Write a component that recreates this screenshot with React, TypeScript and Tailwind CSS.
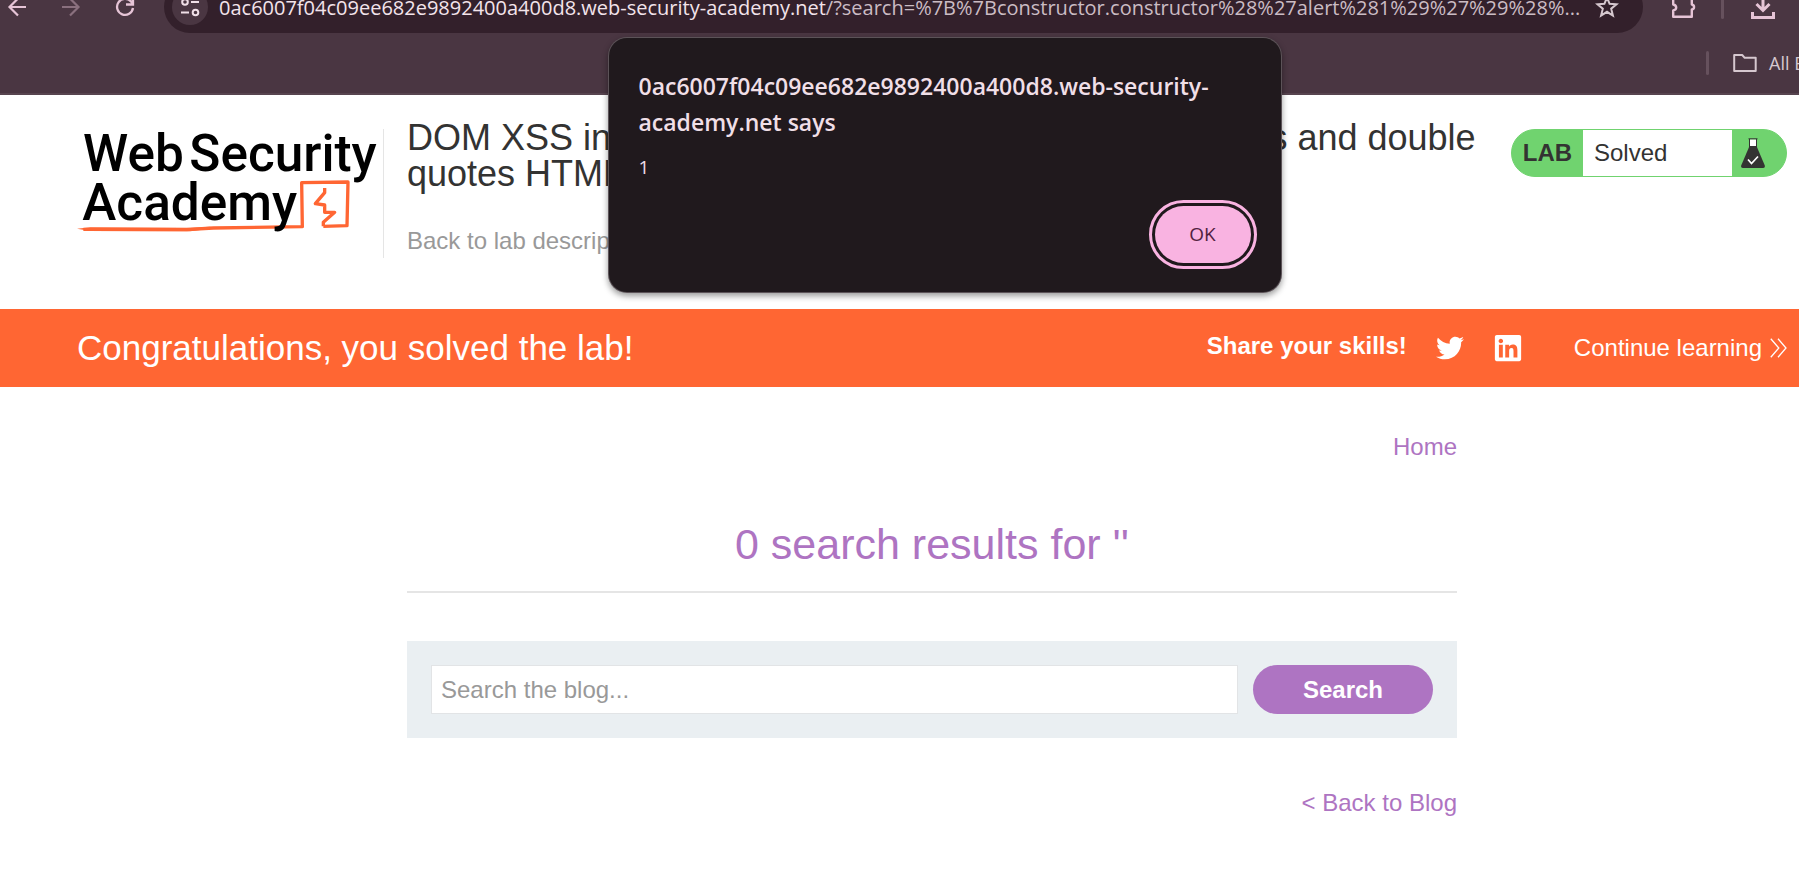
import { FaLinkedin, FaTwitter } from "react-icons/fa";

const uiFont = "font-['Open_Sans','Noto_Sans',sans-serif]";

function BrowserToolbar() {
  return (
    <header
      className={`h-[95px] overflow-hidden border-b-2 border-[#57444f] bg-[#4a3642] ${uiFont}`}
    >
      <div className="-mt-[19px] flex h-[52px] items-center pl-[5px]">
        <nav className="flex shrink-0 items-center gap-[30px]" aria-label="Browser">
          <button type="button" aria-label="Back" className="text-[#e6c4d6]">
            <svg width="24" height="24" viewBox="0 0 24 24" fill="none" stroke="currentColor" strokeWidth="2.2">
              <path d="M21 12H5M13 3.5 4.5 12l8.500 8.500" />
            </svg>
          </button>
          <button type="button" aria-label="Forward" className="text-[#8a707e]">
            <svg width="24" height="24" viewBox="0 0 24 24" fill="none" stroke="currentColor" strokeWidth="2.2">
              <path d="M3 12h16M11 3.500 19.500 12 11 20.500" />
            </svg>
          </button>
          <button type="button" aria-label="Reload" className="text-[#e6c4d6]">
            <svg width="24" height="24" viewBox="0 0 24 24" fill="none" stroke="currentColor" strokeWidth="2.3">
              <path d="M20 13a8 8 0 1 1-2-6.500L20 9M20 3v6.500h-7" />
            </svg>
          </button>
        </nav>
        <div className="ml-[27px] flex h-[52px] min-w-0 flex-1 items-center rounded-full bg-[#33202b] pr-[24px] pl-2">
          <button
            type="button"
            aria-label="Site information"
            className="flex size-9 shrink-0 items-center justify-center rounded-full bg-[#4a3642] text-[#f0dfe7]"
          >
            <svg width="20" height="20" viewBox="0 0 20 20" fill="none" stroke="currentColor" strokeWidth="2">
              <circle cx="5" cy="5" r="2.800" />
              <path d="M11 5h8M1 15.500h8" />
              <circle cx="15.500" cy="15.500" r="2.800" />
            </svg>
          </button>
          <p className="ml-[11px] min-w-0 flex-1 overflow-hidden pt-0.5 text-[20px] leading-8 whitespace-nowrap text-[#cbbcc4]">
            <span className="text-[#f3e4eb]">0ac6007f04c09ee682e9892400a400d8.web-security-academy.net</span>
            /?search=%7B%7Bconstructor.constructor%28%27alert%281%29%27%29%28%...
          </p>
          <button type="button" aria-label="Bookmark" className="ml-3 shrink-0 text-[#d6c8cf]">
            <svg width="24" height="24" viewBox="0 0 24 24" fill="none" stroke="currentColor" strokeWidth="2">
              <path d="m12 2.500 2.600 6.300 6.900.5-5.300 4.400 1.700 6.800L12 16.800l-5.900 3.700 1.700-6.800-5.300-4.400 6.900-.5z" />
            </svg>
          </button>
        </div>
        <div className="flex shrink-0 items-center pr-[22px] pl-[27px] text-[#e6c4d6]">
          <button type="button" aria-label="Extensions">
            <svg width="26" height="26" viewBox="0 0 26 26" fill="none" stroke="currentColor" strokeWidth="2.400" strokeLinejoin="round">
              <path d="M3.200 4.500h6a3 3 0 0 1 5.600 0h7v6c3 .5 3 4.500 0 5v7.300H3.200v-6.300c4-.8 4-5.200 0-6z" />
            </svg>
          </button>
          <span className="ml-[25px] h-6 w-[3px] rounded-full bg-[#66515d]" />
          <button type="button" aria-label="Downloads" className="ml-[25px]">
            <svg width="28" height="28" viewBox="0 0 28 28" fill="none" stroke="currentColor" strokeWidth="3">
              <path d="M14 1v16M7.500 11l6.500 6.500 6.500-6.500M3.500 19v5.500h21V19" />
            </svg>
          </button>
        </div>
      </div>
      <div className="flex h-[60px] items-center justify-end overflow-hidden">
        <span className="h-6 w-[3px] shrink-0 rounded-full bg-[#66515d]" />
        <button type="button" className="ml-[24px] flex w-[66px] shrink-0 items-center gap-3 overflow-hidden text-[18px] whitespace-nowrap text-[#d6c8cf]">
          <svg className="shrink-0" width="24" height="20" viewBox="0 0 24 20" fill="none" stroke="currentColor" strokeWidth="2" strokeLinejoin="round">
            <path d="M1.200 2h8l2.500 2.800h11V18H1.200z" />
          </svg>
          All Bookmarks
        </button>
      </div>
    </header>
  );
}

function AcademyLogo() {
  return (
    <svg
      role="img"
      aria-label="Web Security Academy"
      className="h-[129px] w-[300px] shrink-0"
      viewBox="51 57 900 387"
    >
      <g fill="none" stroke="#ff6633" strokeWidth="10" strokeLinejoin="round">
        <path d="M70 358 380 359 460 354 727 350 725 218 864 216 861 347 790 349" />
        <path d="M794 234v14l-28 33 28 4v22h30l-34 30v12" />
      </g>
      <path d="M51 356l40-4 300 1 60-3v6l-60 8-300-1z" fill="#ff6633" />
      <g fill="#000" fontFamily="Roboto, sans-serif" fontWeight="500" fontSize="154">
        <text x="69" y="182">Web</text>
        <text x="388" y="182">Security</text>
        <text x="67" y="329">Academy</text>
      </g>
    </svg>
  );
}

function LabStatus() {
  return (
    <div className="flex h-12 w-[276px] shrink-0 overflow-hidden rounded-full border border-[#70d36f] bg-[#70d36f] text-2xl text-[#333332]">
      <span className="flex w-[71px] items-center justify-center font-bold">LAB</span>
      <p className="flex w-[149px] items-center bg-white pl-[11px]">Solved</p>
      <svg className="mt-2 ml-[9px]" width="24" height="31" viewBox="0 0 24 31">
        <path d="M8.500 1.500h7v7h-7z" fill="#fff" />
        <path d="M7.500.8h9M8.500 1v8M15.500 1v8" stroke="#333332" fill="none" />
        <path d="M8.500 8h7l8.300 19.500q.4 2.500-2 2.500H2.200q-2.400 0-2-2.500z" fill="#333332" />
        <path d="m7 21.500 3.500 4L17 18.500" stroke="#fff" strokeWidth="1.700" fill="none" />
      </svg>
    </div>
  );
}

function AlertDialog() {
  return (
    <div
      role="alertdialog"
      aria-labelledby="alert-title"
      aria-describedby="alert-text"
      className={`absolute top-[38px] left-1/2 -ml-[291px] flex h-[254px] w-[672px] flex-col rounded-[18px] bg-[#20191d] px-[30px] pt-[30px] pb-[29px] text-[#f0dfe7] shadow-[0_0_0_1px_#5c5358,0_3px_6px_1px_rgba(0,0,0,0.4)] ${uiFont}`}
    >
      <h2 id="alert-title" className="text-[23px] leading-9 font-semibold">
        0ac6007f04c09ee682e9892400a400d8.web-security-
        <br />
        academy.net says
      </h2>
      <p id="alert-text" className="mt-[15px] text-[19px] leading-6">1</p>
      <button
        type="button"
        className="mt-auto h-[57px] w-24 self-end rounded-full bg-[#f9b3e1] text-[19px] font-medium text-[#52213f] outline-[3px] outline-offset-[3px] outline-[#f9b3e1]"
      >
        OK
      </button>
    </div>
  );
}

export default function App() {
  return (
    <div className="relative min-h-screen overflow-hidden bg-white font-['Liberation_Sans',Arial,sans-serif] text-2xl text-[#333332]">
      <BrowserToolbar />

      <section className="flex h-[214px] items-start pt-[34px] pr-3 pl-[77px]">
        <AcademyLogo />
        <div className="ml-[6px] h-[129px] w-px shrink-0 bg-[#e5e5e5]" />
        <div className="-mt-[9px] ml-[23px] min-w-0 flex-1 pr-6">
          <h1 className="text-[36px] leading-9">
            DOM XSS in AngularJS expression with angle brackets and double quotes HTML-encoded
          </h1>
          <a href="#lab" className="mt-[35px] inline-block leading-7 text-[#999]">
            Back to lab description
          </a>
        </div>
        <LabStatus />
      </section>

      <section className="flex h-[78px] items-center bg-[#ff6633] pr-3 pl-[77px] text-white">
        <h2 className="flex-1 text-[35px] leading-10">Congratulations, you solved the lab!</h2>
        <p className="pb-1 leading-7 font-bold">Share your skills!</p>
        <a href="#twitter" aria-label="Share on Twitter" className="ml-[29px]">
          <FaTwitter size={28} />
        </a>
        <a href="#linkedin" aria-label="Share on LinkedIn" className="ml-[29px]">
          <FaLinkedin size={30} />
        </a>
        <a href="#continue" className="ml-[51px] flex items-center gap-2 leading-7">
          Continue learning
          <svg width="17" height="20" viewBox="0 0 17 20" fill="none" stroke="currentColor" strokeWidth="1.300">
            <path d="m.8.800 8 9.200-8 9.200M8 .800l8 9.200-8 9.200" />
          </svg>
        </a>
      </section>

      <div className="pr-3 pl-[77px]">
        <main className="mx-auto max-w-[1050px] pt-[46px]">
          <nav className="flex justify-end leading-7 text-[#ae74c2]">
            <a href="#home">Home</a>
          </nav>
          <h1 className="mt-[58px] border-b-2 border-[#e5e5e5] pb-[22px] text-center text-[43px] leading-[50px] text-[#ae74c2]">
            0 search results for ''
          </h1>
          <form
            className="mt-12 flex gap-[15px] bg-[#eaeff2] p-6"
            onSubmit={(e) => e.preventDefault()}
          >
            <input
              type="text"
              aria-label="Search the blog"
              placeholder="Search the blog..."
              className="h-[49px] min-w-0 flex-1 border border-[#e2e4e6] bg-white px-[9px] placeholder:text-[#999]"
            />
            <button type="submit" className="h-[49px] w-[180px] rounded-full bg-[#ae74c2] font-bold text-white">
              Search
            </button>
          </form>
          <div className="mt-[51px] flex justify-end leading-7 text-[#ae74c2]">
            <a href="#blog">&lt; Back to Blog</a>
          </div>
        </main>
      </div>

      <AlertDialog />
    </div>
  );
}
